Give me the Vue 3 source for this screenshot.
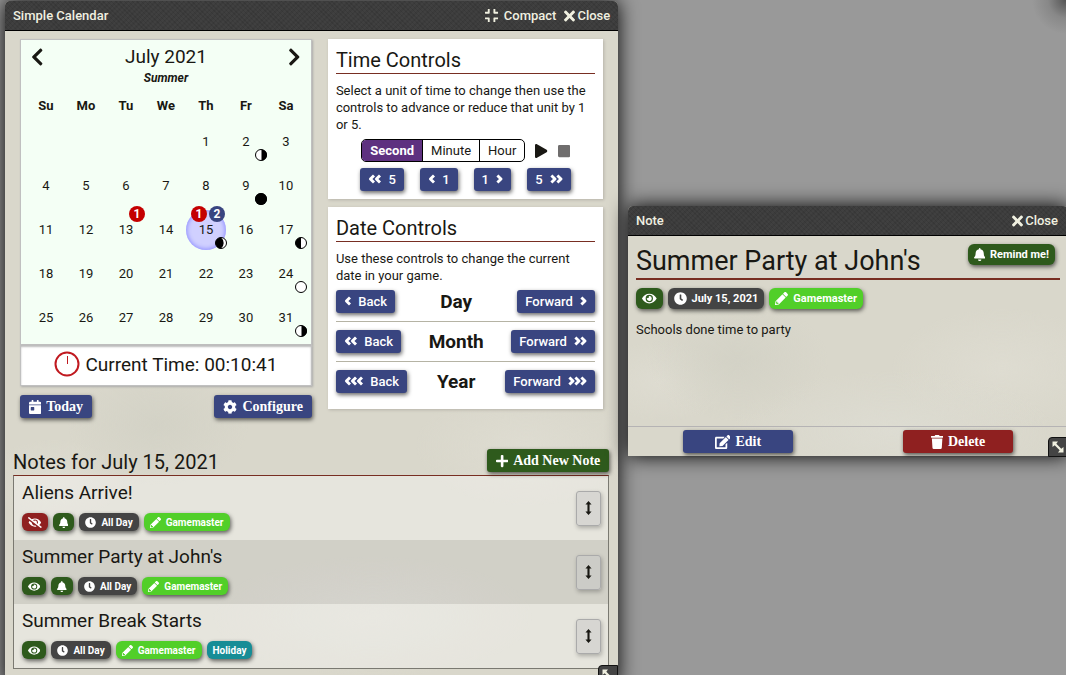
<script setup>
import { h, ref } from 'vue'

const chevrons = (count, forward) => {
  const width = 2 + count * 5
  let d = ''
  for (let i = 0; i < count; i++) {
    const x = i * 5
    d += forward ? `M${x + 2} 2L${x + 5} 5L${x + 2} 8` : `M${x + 5} 2L${x + 2} 5L${x + 5} 8`
  }
  return [width, 10, d, true]
}

const icons = {
  back1: chevrons(1, false),
  back2: chevrons(2, false),
  back3: chevrons(3, false),
  next1: chevrons(1, true),
  next2: chevrons(2, true),
  next3: chevrons(3, true),
  left: [320, 512, 'M34.52 239.03L228.87 44.69c9.37-9.37 24.57-9.37 33.94 0l22.67 22.67c9.36 9.36 9.37 24.52.04 33.9L131.49 256l154.02 154.75c9.34 9.38 9.32 24.54-.04 33.9l-22.67 22.67c-9.37 9.37-24.57 9.37-33.94 0L34.52 272.97c-9.37-9.37-9.37-24.57 0-33.94z'],
  right: [320, 512, 'M285.48 272.97L91.13 467.31c-9.37 9.37-24.57 9.37-33.94 0l-22.67-22.67c-9.36-9.36-9.37-24.52-.04-33.9L188.51 256 34.48 101.25c-9.34-9.38-9.32-24.54.04-33.9l22.67-22.67c9.37-9.37 24.57-9.37 33.94 0L285.48 239.03c9.37 9.37 9.37 24.57 0 33.94z'],
  eye: [576, 512, 'M572.52 241.4C518.29 135.59 410.93 64 288 64S57.68 135.64 3.48 241.41a32.35 32.35 0 0 0 0 29.19C57.71 376.41 165.07 448 288 448s230.32-71.64 284.52-177.41a32.35 32.35 0 0 0 0-29.19zM288 400a144 144 0 1 1 144-144 143.93 143.93 0 0 1-144 144zm0-240a95.31 95.31 0 0 0-25.31 3.79 47.85 47.85 0 0 1-66.9 66.9A95.78 95.78 0 1 0 288 160z'],
  eyeSlash: [640, 512, 'M320 400c-75.85 0-137.25-58.71-142.9-133.11L72.2 185.82c-13.79 17.3-26.48 35.59-36.72 55.59a32.35 32.35 0 0 0 0 29.19C89.71 376.41 197.07 448 320 448c26.91 0 52.87-4 77.89-10.46L346 397.39a144.13 144.13 0 0 1-26 2.61zm313.82 58.1l-110.55-85.44a331.25 331.25 0 0 0 81.25-102.07 32.35 32.35 0 0 0 0-29.19C550.29 135.59 442.93 64 320 64a308.15 308.15 0 0 0-147.32 37.7L45.46 3.37A16 16 0 0 0 23 6.18L3.37 31.45A16 16 0 0 0 6.18 53.9l588.36 454.73a16 16 0 0 0 22.46-2.81l19.64-25.27a16 16 0 0 0-2.82-22.45zm-183.72-142l-39.3-30.38A94.75 94.75 0 0 0 416 256a94.76 94.76 0 0 0-121.31-92.21A47.65 47.65 0 0 1 304 192a46.64 46.64 0 0 1-1.54 10l-73.61-56.89A142.31 142.31 0 0 1 320 112a143.92 143.92 0 0 1 144 144c0 21.63-5.29 41.79-13.9 60.11z'],
  bell: [448, 512, 'M224 512c35.32 0 63.97-28.65 63.97-64H160.03c0 35.35 28.65 64 63.97 64zm215.39-149.71c-19.32-20.76-55.47-51.99-55.47-154.29 0-77.7-54.48-139.9-127.94-155.16V32c0-17.67-14.32-32-31.98-32s-31.98 14.33-31.98 32v20.84C118.56 68.1 64.08 130.3 64.08 208c0 102.3-36.15 133.53-55.47 154.29-6 6.45-8.66 14.16-8.61 21.71.11 16.4 12.98 32 32.1 32h383.8c19.12 0 32-15.6 32.1-32 .05-7.55-2.61-15.27-8.61-21.71z'],
  clock: [512, 512, 'M256 8C119 8 8 119 8 256s111 248 248 248 248-111 248-248S393 8 256 8zm92.49 313l-20 25a16 16 0 0 1-22.49 2.5l-67-49.72a40 40 0 0 1-15-31.23V112a16 16 0 0 1 16-16h32a16 16 0 0 1 16 16v144l58 42.5a16 16 0 0 1 2.49 22.5z'],
  pencil: [512, 512, 'M497.9 142.1l-46.1 46.1c-4.7 4.7-12.3 4.7-17 0l-111-111c-4.7-4.7-4.7-12.3 0-17l46.1-46.1c18.7-18.7 49.1-18.7 67.9 0l60.1 60.1c18.8 18.7 18.8 49.1 0 67.9zM284.2 99.8L21.6 362.4.4 483.9c-2.9 16.4 11.4 30.6 27.8 27.8l121.5-21.3 262.6-262.6c4.7-4.7 4.7-12.3 0-17l-111-111c-4.8-4.7-12.4-4.7-17.1 0zM88 424h48v36.3l-64.5 11.3-31.1-31.1L51.7 376H88v48z'],
  times: [352, 512, 'M242.72 256l100.07-100.07c12.28-12.28 12.28-32.19 0-44.48l-22.24-22.24c-12.28-12.28-32.19-12.28-44.48 0L176 189.28 75.93 89.21c-12.28-12.28-32.19-12.28-44.48 0L9.21 111.45c-12.28 12.28-12.28 32.19 0 44.48L109.28 256 9.21 356.07c-12.28 12.28-12.28 32.19 0 44.48l22.24 22.24c12.28 12.28 32.2 12.28 44.48 0L176 322.72l100.07 100.07c12.28 12.28 32.2 12.28 44.48 0l22.24-22.24c12.28-12.28 12.28-32.19 0-44.48L242.72 256z'],
  compress: [448, 512, 'M436 192H312c-13.3 0-24-10.7-24-24V44c0-6.6 5.4-12 12-12h40c6.6 0 12 5.4 12 12v84h84c6.6 0 12 5.4 12 12v40c0 6.6-5.4 12-12 12zm-276-24V44c0-6.6-5.4-12-12-12h-40c-6.6 0-12 5.4-12 12v84H12c-6.6 0-12 5.4-12 12v40c0 6.6 5.4 12 12 12h124c13.3 0 24-10.7 24-24zm0 300V344c0-13.3-10.7-24-24-24H12c-6.6 0-12 5.4-12 12v40c0 6.6 5.4 12 12 12h84v84c0 6.6 5.4 12 12 12h40c6.6 0 12-5.4 12-12zm192 0v-84h84c6.6 0 12-5.4 12-12v-40c0-6.6-5.4-12-12-12H312c-13.3 0-24 10.7-24 24v124c0 6.6 5.4 12 12 12h40c6.6 0 12-5.4 12-12z'],
  play: [448, 512, 'M424.4 214.7L72.4 6.6C43.8-10.3 0 6.1 0 47.9V464c0 37.5 40.7 60.1 72.4 41.3l352-208c31.4-18.5 31.5-64.1 0-82.6z'],
  stop: [448, 512, 'M400 32H48C21.5 32 0 53.5 0 80v352c0 26.5 21.5 48 48 48h352c26.5 0 48-21.5 48-48V80c0-26.5-21.5-48-48-48z'],
  calendar: [448, 512, 'M0 464c0 26.5 21.5 48 48 48h352c26.5 0 48-21.5 48-48V192H0v272zm64-192c0-8.8 7.2-16 16-16h96c8.8 0 16 7.2 16 16v96c0 8.8-7.2 16-16 16H80c-8.8 0-16-7.2-16-16v-96zM400 64h-48V16c0-8.8-7.2-16-16-16h-32c-8.8 0-16 7.2-16 16v48H160V16c0-8.8-7.2-16-16-16h-32c-8.8 0-16 7.2-16 16v48H48C21.5 64 0 85.5 0 112v48h448v-48c0-26.5-21.5-48-48-48z'],
  cog: [512, 512, 'M487.4 315.7l-42.6-24.6c4.3-23.2 4.3-47 0-70.2l42.6-24.6c4.9-2.8 7.1-8.6 5.5-14-11.1-35.6-30-67.8-54.7-94.6-3.8-4.1-10-5.1-14.8-2.3L380.8 110c-17.9-15.4-38.5-27.3-60.8-35.1V25.8c0-5.6-3.9-10.5-9.4-11.7-36.7-8.2-74.3-7.8-109.2 0-5.5 1.2-9.4 6.1-9.4 11.7V75c-22.2 7.9-42.8 19.8-60.8 35.1L88.7 85.5c-4.9-2.8-11-1.9-14.8 2.3-24.7 26.7-43.6 58.9-54.7 94.6-1.7 5.4.6 11.2 5.5 14L67.3 221c-4.3 23.2-4.3 47 0 70.2l-42.6 24.6c-4.9 2.8-7.1 8.6-5.5 14 11.1 35.6 30 67.8 54.7 94.6 3.8 4.1 10 5.1 14.8 2.3l42.6-24.6c17.9 15.4 38.5 27.3 60.8 35.1v49.2c0 5.6 3.9 10.5 9.4 11.7 36.7 8.2 74.3 7.8 109.2 0 5.5-1.2 9.4-6.1 9.4-11.7v-49.2c22.2-7.9 42.8-19.8 60.8-35.1l42.6 24.6c4.9 2.8 11 1.9 14.8-2.3 24.7-26.7 43.6-58.9 54.7-94.6 1.5-5.5-.7-11.3-5.6-14.1zM256 336c-44.1 0-80-35.9-80-80s35.9-80 80-80 80 35.9 80 80-35.9 80-80 80z'],
  plus: [448, 512, 'M416 208H272V64c0-17.67-14.33-32-32-32h-32c-17.67 0-32 14.33-32 32v144H32c-17.67 0-32 14.33-32 32v32c0 17.67 14.33 32 32 32h144v144c0 17.67 14.33 32 32 32h32c17.67 0 32-14.33 32-32V304h144c17.67 0 32-14.33 32-32v-32c0-17.67-14.33-32-32-32z'],
  edit: [576, 512, 'M402.6 83.2l90.2 90.2c3.8 3.8 3.8 10 0 13.8L274.4 405.6l-92.8 10.3c-12.4 1.4-22.9-9.1-21.5-21.5l10.3-92.8L388.8 83.2c3.8-3.8 10-3.8 13.8 0zm162-22.9l-48.8-48.8c-15.2-15.2-39.9-15.2-55.2 0l-35.4 35.4c-3.8 3.8-3.8 10 0 13.8l90.2 90.2c3.8 3.8 10 3.8 13.8 0l35.4-35.4c15.2-15.3 15.2-40 0-55.2zM384 346.2V448H64V128h229.8c3.2 0 6.2-1.3 8.5-3.5l40-40c7.6-7.6 2.2-20.5-8.5-20.5H48C21.5 64 0 85.5 0 112v352c0 26.5 21.5 48 48 48h352c26.5 0 48-21.5 48-48V306.2c0-10.7-12.9-16-20.5-8.5l-40 40c-2.2 2.3-3.5 5.3-3.5 8.5z'],
  trash: [448, 512, 'M432 32H312l-9.4-18.7A24 24 0 0 0 281.1 0H166.8a23.72 23.72 0 0 0-21.4 13.3L136 32H16A16 16 0 0 0 0 48v32a16 16 0 0 0 16 16h416a16 16 0 0 0 16-16V48a16 16 0 0 0-16-16zM53.2 467a48 48 0 0 0 47.9 45h245.8a48 48 0 0 0 47.9-45L416 128H32z'],
  vertical: [8, 16, 'M4 0L7.5 4H5.2V12H7.5L4 16L.5 12H2.8V4H.5z'],
  resize: [12, 12, 'M.5 .5H6L4.3 2.7L9.3 7.7L11.5 6V11.5H6L7.7 9.3L2.7 4.3L.5 6z'],
}

const Icon = (props) => {
  const [w, hgt, d, stroked] = icons[props.name]
  return h('svg', { class: ['icon', { stroked }], viewBox: `0 0 ${w} ${hgt}`, 'aria-hidden': 'true' }, [h('path', { d })])
}
Icon.props = ['name']

const weekdays = ['Su', 'Mo', 'Tu', 'We', 'Th', 'Fr', 'Sa']
const weeks = [
  [null, null, null, null, 1, 2, 3],
  [4, 5, 6, 7, 8, 9, 10],
  [11, 12, 13, 14, 15, 16, 17],
  [18, 19, 20, 21, 22, 23, 24],
  [25, 26, 27, 28, 29, 30, 31],
]
// Dark part of each moon, drawn over a white disc of radius 6
const moons = {
  2: 'M6.5 .5a5.5 5.5 0 0 1 0 11z',
  9: 'M6 0a6 6 0 0 1 0 12a6 6 0 0 1 0-12z',
  15: 'M6 .5a5.5 5.5 0 0 0 0 11a7 7 0 0 0 0-11z',
  17: 'M6 .5a5.5 5.5 0 0 0 0 11z',
  24: '',
  31: 'M6.5 .5a5.5 5.5 0 0 1 0 11z',
}
const badges = {
  13: [{ kind: 'red', n: 1 }],
  15: [{ kind: 'red', n: 1 }, { kind: 'blue', n: 2 }],
}

const selected = ref(15)
const units = ['Second', 'Minute', 'Hour']
const unit = ref('Second')
const dateRows = [
  { label: 'Day', n: 1 },
  { label: 'Month', n: 2 },
  { label: 'Year', n: 3 },
]

const eye = { kind: 'green', icon: 'eye' }
const bell = { kind: 'green', icon: 'bell' }
const allDay = { kind: 'dark', icon: 'clock', text: 'All Day' }
const author = { kind: 'lime', icon: 'pencil', text: 'Gamemaster' }
const notes = [
  { title: 'Aliens Arrive!', tags: [{ kind: 'red', icon: 'eyeSlash' }, bell, allDay, author] },
  { title: "Summer Party at John's", tags: [eye, bell, allDay, author] },
  { title: 'Summer Break Starts', tags: [eye, allDay, author, { kind: 'teal', text: 'Holiday' }] },
]
const noteTags = [eye, { kind: 'dark', icon: 'clock', text: 'July 15, 2021' }, author]
</script>

<template>
  <div class="desktop">
    <section class="window calendar-window">
      <header class="bar">
        <h4>Simple Calendar</h4>
        <a href="#"><Icon name="compress" class="compact" />Compact</a>
        <a href="#" class="close"><Icon name="times" />Close</a>
      </header>

      <div class="content">
        <div class="columns">
          <div class="left">
            <div class="month">
              <div class="month-head">
                <button class="arrow" aria-label="Previous month"><Icon name="left" /></button>
                <h2>July 2021</h2>
                <button class="arrow" aria-label="Next month"><Icon name="right" /></button>
              </div>
              <p class="season">Summer</p>
              <table>
                <thead>
                  <tr><th v-for="d in weekdays" :key="d">{{ d }}</th></tr>
                </thead>
                <tbody>
                  <tr v-for="(week, i) in weeks" :key="i">
                    <td v-for="(day, j) in week" :key="j">
                      <template v-if="day">
                        <button class="day" :class="{ selected: selected === day }" @click="selected = day">{{ day }}</button>
                        <span v-if="badges[day]" class="badges">
                          <span v-for="b in badges[day]" :key="b.kind" :class="b.kind">{{ b.n }}</span>
                        </span>
                        <svg v-if="day in moons" class="moon" viewBox="0 0 12 12" aria-hidden="true">
                          <circle cx="6" cy="6" r="5.5" />
                          <path :d="moons[day]" />
                        </svg>
                      </template>
                    </td>
                  </tr>
                </tbody>
              </table>
            </div>
            <div class="clock">
              <svg viewBox="0 0 26 26" aria-hidden="true">
                <circle cx="13" cy="13" r="11.5" />
                <path d="M13.5 5v8" />
              </svg>
              <span>Current Time: 00:10:41</span>
            </div>
            <div class="actions">
              <button class="btn serif"><Icon name="calendar" />Today</button>
              <button class="btn serif"><Icon name="cog" />Configure</button>
            </div>
          </div>

          <div class="right">
            <section class="card">
              <h3>Time Controls</h3>
              <p>Select a unit of time to change then use the controls to advance or reduce that unit by 1 or 5.</p>
              <div class="time-row">
                <div class="units" role="radiogroup" aria-label="Unit of time">
                  <label v-for="u in units" :key="u" :class="{ on: unit === u }">
                    <input v-model="unit" type="radio" name="unit" :value="u" />{{ u }}
                  </label>
                </div>
                <button class="media" aria-label="Start"><Icon name="play" /></button>
                <button class="media stop" aria-label="Stop"><Icon name="stop" /></button>
              </div>
              <div class="steps">
                <button class="btn"><Icon name="back2" />5</button>
                <button class="btn"><Icon name="back1" />1</button>
                <button class="btn">1<Icon name="next1" /></button>
                <button class="btn">5<Icon name="next2" /></button>
              </div>
            </section>

            <section class="card">
              <h3>Date Controls</h3>
              <p>Use these controls to change the current date in your game.</p>
              <div v-for="r in dateRows" :key="r.label" class="date-row">
                <button class="btn"><Icon :name="'back' + r.n" />Back</button>
                <strong>{{ r.label }}</strong>
                <button class="btn">Forward<Icon :name="'next' + r.n" /></button>
              </div>
            </section>
          </div>
        </div>

        <div class="notes-head">
          <h2>Notes for July 15, 2021</h2>
          <button class="btn serif add"><Icon name="plus" />Add New Note</button>
        </div>
        <ul class="notes">
          <li v-for="n in notes" :key="n.title">
            <div class="entry">
              <h2>{{ n.title }}</h2>
              <div class="tags">
                <span v-for="(t, i) in n.tags" :key="i" class="tag" :class="t.kind">
                  <Icon v-if="t.icon" :name="t.icon" /><template v-if="t.text">{{ t.text }}</template>
                </span>
              </div>
            </div>
            <button class="drag" aria-label="Reorder"><Icon name="vertical" /></button>
          </li>
        </ul>
      </div>
      <span class="handle"><Icon name="resize" /></span>
    </section>

    <section class="window note-window">
      <header class="bar">
        <h4>Note</h4>
        <a href="#" class="close"><Icon name="times" />Close</a>
      </header>
      <div class="note-body">
        <div class="note-title">
          <h1>Summer Party at John's</h1>
          <button class="tag green remind"><Icon name="bell" />Remind me!</button>
        </div>
        <div class="tags large">
          <span v-for="(t, i) in noteTags" :key="i" class="tag" :class="t.kind">
            <Icon :name="t.icon" /><template v-if="t.text">{{ t.text }}</template>
          </span>
        </div>
        <p>Schools done time to party</p>
      </div>
      <footer>
        <button class="btn serif"><Icon name="edit" />Edit</button>
        <button class="btn serif delete"><Icon name="trash" />Delete</button>
      </footer>
      <span class="handle"><Icon name="resize" /></span>
    </section>
  </div>
</template>

<style>
body {
  margin: 0;
  overflow: hidden;
}
</style>

<style scoped>
* {
  box-sizing: border-box;
}
h1, h2, h3, h4, p, ul {
  margin: 0;
  padding: 0;
  font-weight: 400;
}
button {
  font: inherit;
  color: inherit;
  border: 0;
  padding: 0;
  background: none;
  cursor: pointer;
}
.icon {
  height: 1em;
  fill: currentColor;
  flex: none;
}
.stroked {
  fill: none;
  stroke: currentColor;
  stroke-width: 2.4;
  stroke-linejoin: round;
  height: 12px;
}
.desktop {
  position: relative;
  height: 100vh;
  overflow: hidden;
  background: radial-gradient(circle at 100% 0, #555 0, #888 18px, #999 34px);
  font: 13px/17px Roboto, "Open Sans", sans-serif;
  color: #191813;
}
.window {
  position: absolute;
  border-radius: 5px 5px 0 0;
  box-shadow: 0 0 20px #000;
  display: flex;
  flex-direction: column;
  background:
    radial-gradient(ellipse 90px 60px at 25% 62%, #d3d2c6 0, transparent 100%),
    radial-gradient(ellipse 160px 60px at 60% 90%, #dddcd2 0, transparent 100%),
    radial-gradient(ellipse 110px 60px at 85% 65%, #dedcd1 0, transparent 100%),
    radial-gradient(ellipse 70px 40px at 8% 70%, #dedcd1 0, transparent 100%),
    #d9d7cb;
}
.calendar-window {
  left: 5px;
  top: 1px;
  width: calc(58% - 5px);
  min-height: 100vh;
}
.note-window {
  left: calc(59% - 1px);
  top: 206px;
  right: -2px;
}
.bar {
  display: flex;
  align-items: center;
  gap: 8px;
  height: 30px;
  padding: 0 8px;
  border-bottom: 1px solid #000;
  border-radius: 5px 5px 0 0;
  background:
    repeating-linear-gradient(45deg, transparent 0 2px, rgba(0, 0, 0, 0.08) 2px 3px),
    repeating-linear-gradient(-45deg, #404040 0 2px, #3c3c3c 2px 4px);
  color: #f0f0e0;
}
.note-window .bar {
  padding-right: 10px;
}
.bar h4 {
  flex: 1;
  font-weight: 500;
}
.bar a {
  display: flex;
  align-items: center;
  gap: 2px;
  color: inherit;
  font-weight: 500;
  text-decoration: none;
}
.bar a .compact {
  height: 15px;
  margin-right: 4px;
}
.close .icon {
  height: 16px;
}
.content {
  padding: 8px 9px 16px 8px;
}
.columns {
  display: flex;
  gap: 16px;
  padding: 0 6px 0 7px;
}
.left {
  flex: 53;
}
.right {
  flex: 50;
  display: flex;
  flex-direction: column;
  gap: 8px;
}
.month {
  border: 1px solid #c0c0c0;
  background: #f4fff5;
  box-shadow: 1px 1px 2px #aaa;
  padding: 5px 5px 4px;
}
.month-head {
  display: flex;
  justify-content: space-between;
  align-items: center;
  padding: 0 5px;
}
h2 {
  font-size: 19px;
  line-height: 24px;
}
.arrow {
  display: flex;
  font-size: 20px;
}
.season {
  margin-top: 1px;
  text-align: center;
  font-size: 12px;
  font-weight: 700;
  font-style: italic;
}
table {
  width: 100%;
  table-layout: fixed;
  border-collapse: collapse;
}
th {
  height: 33px;
  padding: 4px 0 0;
  font-weight: 700;
}
td {
  position: relative;
  height: 44px;
  padding: 0;
  text-align: center;
}
.day {
  width: 40px;
  height: 40px;
  padding-bottom: 2px;
  border-radius: 50%;
  vertical-align: middle;
}
.day.selected {
  background: #d0d0ff;
  box-shadow: inset 0 0 4px 1px #9090ff;
}
.moon {
  position: absolute;
  right: -1px;
  bottom: 3px;
  width: 12px;
  height: 12px;
}
.moon circle {
  fill: #fff;
  stroke: #000;
}
.badges {
  position: absolute;
  top: -2px;
  right: 1px;
  display: flex;
  gap: 2px;
}
.badges span {
  width: 16px;
  height: 16px;
  border-radius: 50%;
  color: #fff;
  font-size: 12px;
  font-weight: 700;
  line-height: 16px;
}
.badges .red {
  background: #c40000;
}
.badges .blue {
  background: #394580;
}
.clock {
  display: flex;
  align-items: center;
  justify-content: center;
  gap: 5px;
  height: 41px;
  padding-bottom: 2px;
  background: #fff;
  border: 1px solid #c0c0c0;
  border-top: 0;
  box-shadow: inset 0 2px 2px #bbb, 1px 1px 2px #aaa;
  font-size: 19px;
}
.clock svg {
  width: 26px;
  height: 26px;
  fill: none;
  stroke: #c0191f;
  stroke-width: 2;
}
.clock path {
  stroke-width: 1;
}
.actions {
  display: flex;
  justify-content: space-between;
  margin-top: 9px;
}
.btn {
  display: flex;
  align-items: center;
  justify-content: center;
  gap: 6px;
  height: 23px;
  padding: 0 8px 1px;
  border-radius: 3px;
  background: #394580;
  color: #fff;
  box-shadow: 1px 2px 4px rgba(0, 0, 0, 0.6);
  font-weight: 500;
}
.serif {
  gap: 5px;
  padding: 0 9px;
  font: 700 14px/17px "Liberation Serif", serif;
}
.add {
  background: #2e5a1c;
}
.card {
  padding: 8px;
  background: #fff;
  box-shadow: 1px 1px 3px #b5b3a8;
}
.card h3 {
  font-size: 20px;
  line-height: 26px;
  border-bottom: 1px solid #782e22;
}
.card p {
  margin: 8px 0 6px;
}
.time-row {
  display: flex;
  justify-content: center;
  align-items: center;
  gap: 10px;
}
.units {
  display: flex;
  border: 1px solid #000;
  border-radius: 5px;
  overflow: hidden;
}
.units label {
  position: relative;
  padding: 0 8px;
  line-height: 21px;
}
.units label + label {
  border-left: 1px solid #000;
}
.units input {
  position: absolute;
  opacity: 0;
  margin: 0;
}
.units .on {
  background: #5e3180;
  color: #fff;
  font-weight: 700;
}
.media {
  display: flex;
  font-size: 14px;
}
.stop {
  color: #6f6d6d;
}
.steps {
  display: flex;
  justify-content: center;
  gap: 16px;
  margin-top: 6px;
}
.date-row {
  display: flex;
  justify-content: space-between;
  align-items: center;
  height: 40px;
  border-bottom: 1px solid #b5b3a4;
}
.date-row:first-of-type {
  height: 32px;
  padding-bottom: 8px;
}
.date-row:last-child {
  height: 39px;
  border: 0;
}
.date-row strong {
  font-size: 19px;
}
.notes-head {
  display: flex;
  justify-content: space-between;
  align-items: flex-end;
  margin-top: 31px;
  padding-bottom: 1px;
}
.notes-head h2 {
  font-size: 20px;
}
.notes-head .btn {
  margin-bottom: 2px;
}
.notes {
  list-style: none;
  border: 1px solid #7a7971;
  border-top-color: #782e22;
}
.notes li {
  display: flex;
  justify-content: space-between;
  align-items: center;
  height: 64px;
  padding: 0 7px 0 8px;
  background: rgba(255, 255, 255, 0.35);
}
.notes li:nth-child(even) {
  background: rgba(170, 170, 180, 0.15);
}
.entry {
  padding-bottom: 4px;
}
.tags {
  display: flex;
  gap: 5px;
  margin-top: 8px;
}
.tag {
  display: flex;
  align-items: center;
  gap: 5px;
  height: 18px;
  padding: 0 6px;
  border-radius: 6px;
  color: #fff;
  font-size: 10px;
  font-weight: 700;
  box-shadow: 1px 2px 4px rgba(0, 0, 0, 0.6);
}
.tag .icon {
  height: 11px;
}
.tag.green {
  background: #2e5a1c;
}
.tag.red {
  background: #8f2020;
}
.tag.dark {
  background: #444;
}
.tag.lime {
  background: #51cf29;
}
.tag.teal {
  background: #178d96;
}
.drag {
  display: flex;
  align-items: center;
  justify-content: center;
  width: 25px;
  height: 35px;
  border: 1px solid #aaa;
  border-radius: 3px;
  background: rgba(200, 200, 200, 0.5);
  box-shadow: 1px 2px 4px rgba(0, 0, 0, 0.25);
  font-size: 14px;
}
.note-body {
  min-height: 190px;
  padding: 8px;
}
.note-title {
  display: flex;
  justify-content: space-between;
  align-items: flex-start;
  border-bottom: 2px solid #782e22;
  padding-right: 5px;
}
.note-title h1 {
  font-size: 27px;
  line-height: 34px;
}
.large .tag,
.remind.tag {
  height: 21px;
  padding: 0 6px;
  font-size: 11px;
}
.large .icon,
.remind .icon {
  height: 13px;
}
.note-body p {
  margin-top: 12px;
}
footer {
  display: flex;
  justify-content: space-around;
  border-top: 1px solid #b5b3b4;
  padding: 3px 0;
}
footer .btn {
  width: 25%;
}
.delete {
  background: #8f2020;
}
.handle {
  position: absolute;
  right: 0;
  bottom: -1px;
  display: flex;
  align-items: center;
  justify-content: center;
  width: 20px;
  height: 20px;
  border: 1px solid #111;
  border-radius: 4px 0 0;
  background: #444;
  color: #f0f0e0;
  font-size: 12px;
}
.calendar-window .handle {
  bottom: 0;
}
</style>
